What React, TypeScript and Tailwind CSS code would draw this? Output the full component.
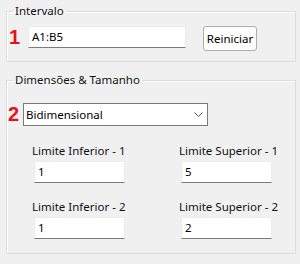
const font = { fontFamily: '"Noto Sans", "Open Sans", sans-serif' };

function TextBox({ value, width }: { value: string; width: string }) {
  return (
    <div
      className={`${width} h-[22px] bg-white border border-[#ececec] border-b-[#7a7a7a] flex items-center px-[3px] text-[11.5px] text-black`}
    >
      {value}
    </div>
  );
}

function Field({ label, value }: { label: string; value: string }) {
  return (
    <div className="flex flex-col">
      <span className="h-[16px] leading-[16px] text-[11.5px] text-[#111] whitespace-nowrap">{label}</span>
      <div className="ml-[2px] mt-[2px]">
        <TextBox value={value} width="w-[91px]" />
      </div>
    </div>
  );
}

export default function App() {
  return (
    <div className="w-[300px] h-[264px] bg-[#f0f0f0] pt-[3px] pl-[6px]" style={font}>
      {/* Intervalo */}
      <fieldset className="w-[290px] border border-[#dcdcdc] pb-[10px] shadow-[inset_1px_1px_0_#fff]">
        <legend className="ml-[6px] px-[2px] text-[11.5px] leading-[16px] text-[#111]">Intervalo</legend>
        <div className="flex items-start mt-[7px]">
          <span className="ml-[2px] w-[19px] h-[22px] leading-[22px] text-[20px] font-bold text-[#e8101a]" style={{ fontFamily: '"Liberation Sans", Arial, sans-serif' }}>
            1
          </span>
          <TextBox value="A1:B5" width="w-[158px]" />
          <button className="ml-[17px] w-[54px] h-[25px] rounded-[3px] border border-[#adadad] bg-[#fdfdfd] text-[11.5px] text-black">
            Reiniciar
          </button>
        </div>
      </fieldset>

      {/* Dimensões & Tamanho */}
      <fieldset className="mt-[10px] w-[290px] border border-[#dcdcdc] pb-[14px] shadow-[inset_1px_1px_0_#fff]">
        <legend className="ml-[6px] px-[2px] text-[11.5px] leading-[16px] text-[#111]">Dimensões &amp; Tamanho</legend>
        <div className="flex items-center mt-[15px]">
          <span className="ml-[1px] w-[15px] h-[23px] leading-[23px] text-[20px] font-bold text-[#e8101a]" style={{ fontFamily: '"Liberation Sans", Arial, sans-serif' }}>
            2
          </span>
          <div className="w-[185px] h-[23px] bg-white border border-[#7a7a7a] flex items-center justify-between pl-[2px] pr-[4px] text-[11.5px] text-black">
            <span>Bidimensional</span>
            <svg width="9" height="6" viewBox="0 0 9 6" className="mt-[1px]">
              <polyline points="0.5,0.5 4.5,4.5 8.5,0.5" fill="none" stroke="#555" strokeWidth="1" />
            </svg>
          </div>
        </div>
        <div className="grid grid-cols-[147px_100px] gap-y-[16px] mt-[17px] ml-[25px]">
          <Field label="Limite Inferior - 1" value="1" />
          <Field label="Limite Superior - 1" value="5" />
          <Field label="Limite Inferior - 2" value="1" />
          <Field label="Limite Superior - 2" value="2" />
        </div>
      </fieldset>
    </div>
  );
}
